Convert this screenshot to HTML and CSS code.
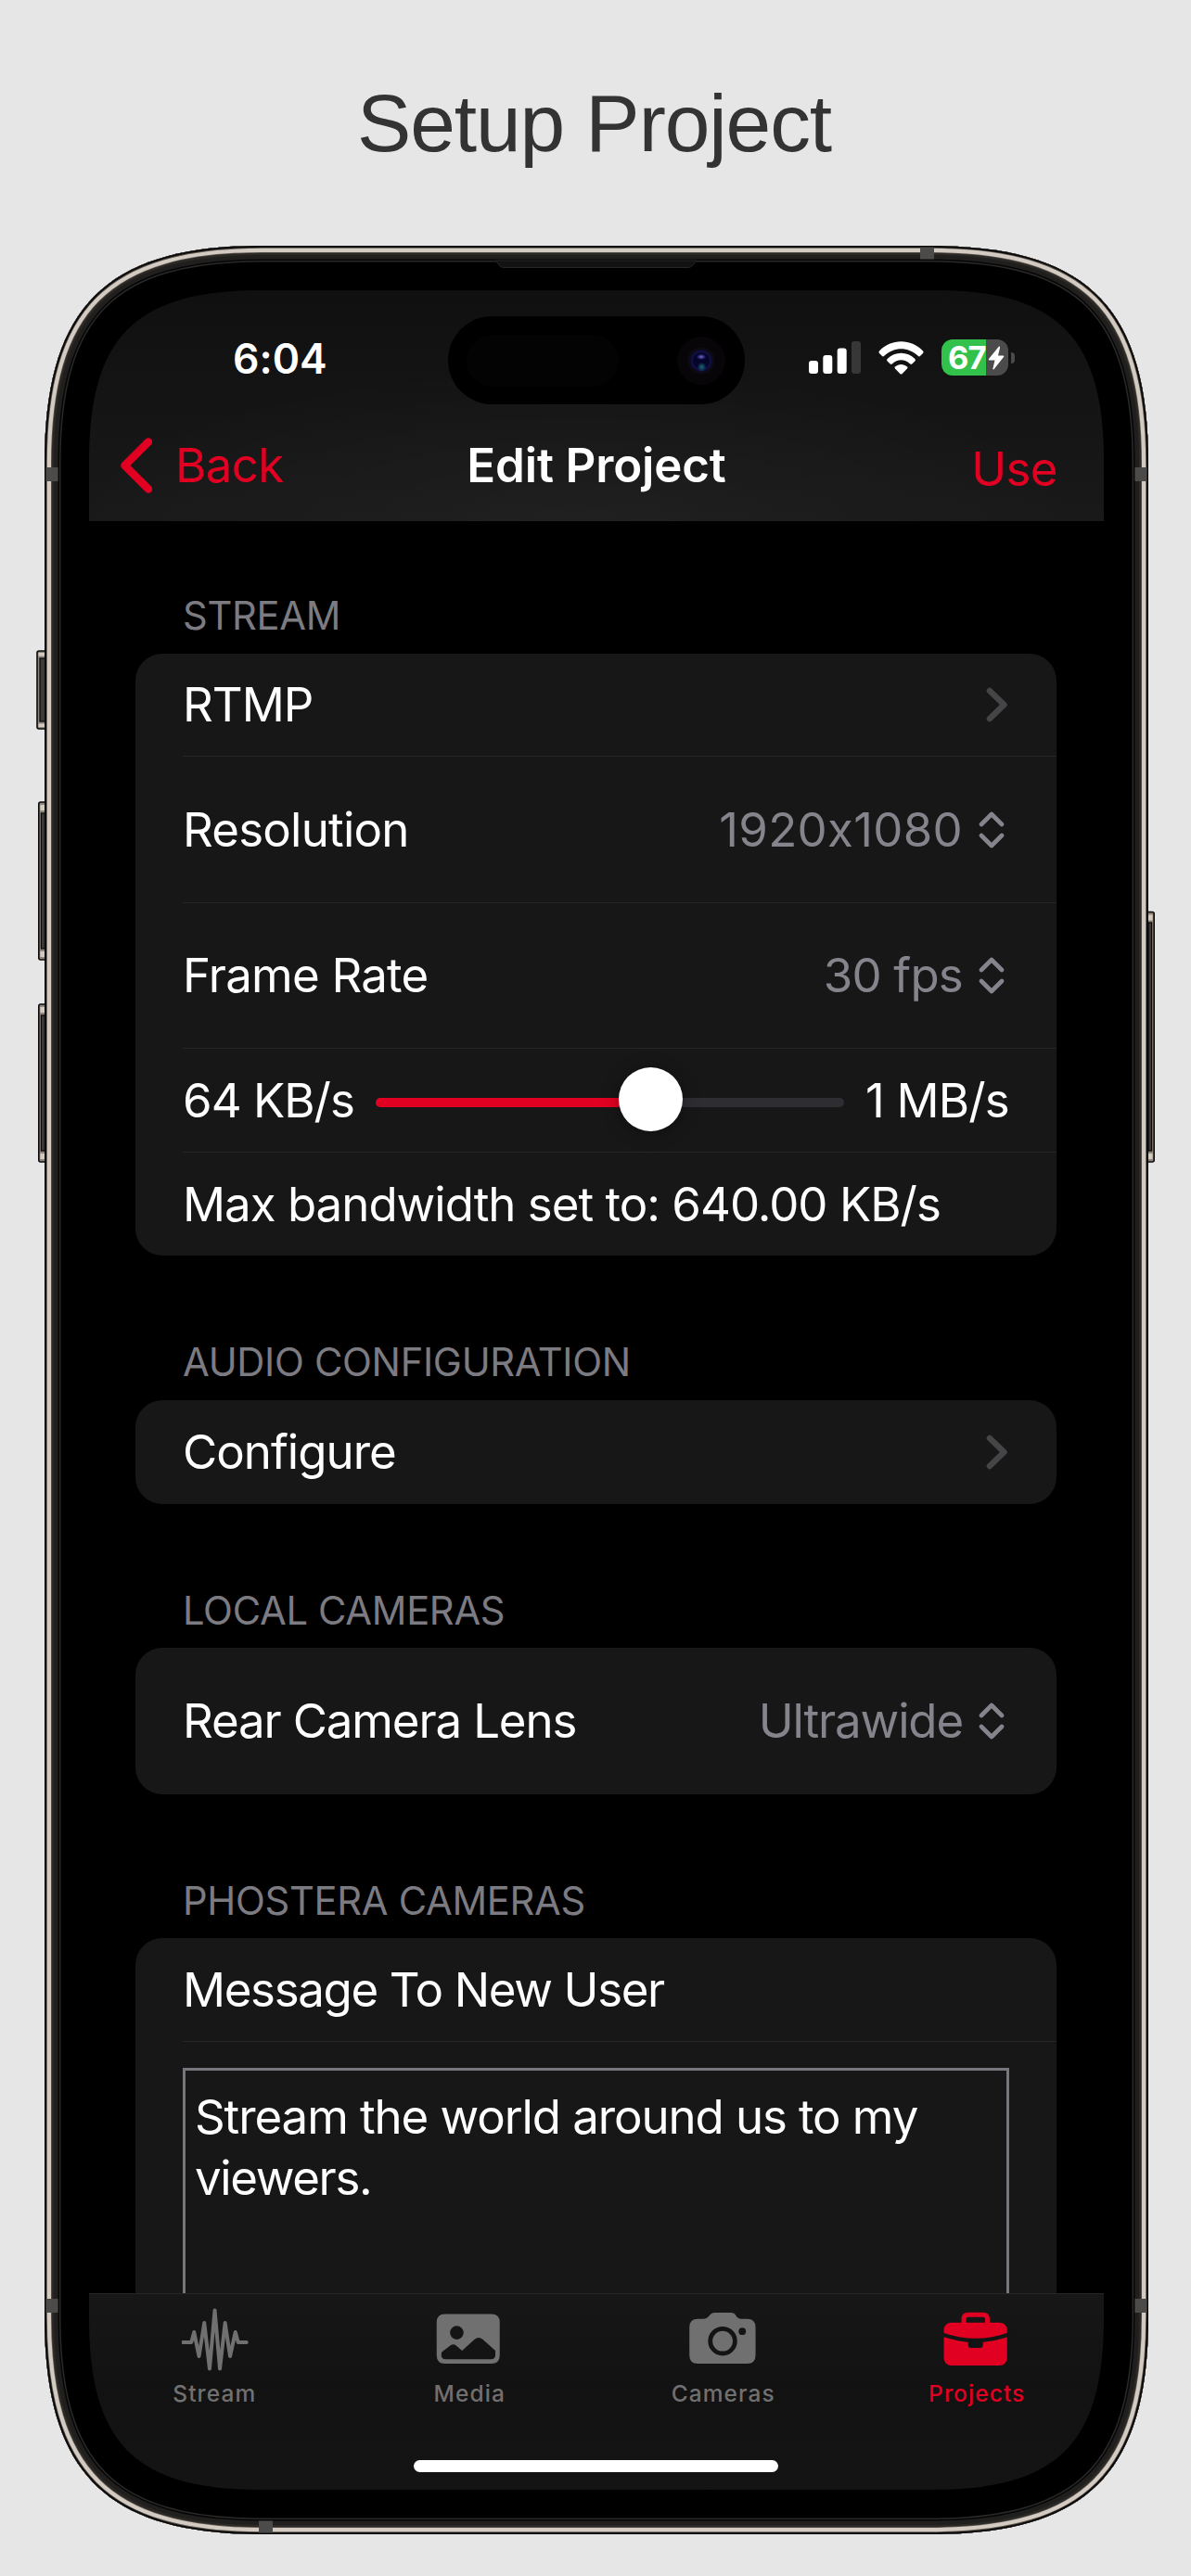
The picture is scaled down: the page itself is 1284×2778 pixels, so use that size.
FILE: index.html
```html
<!DOCTYPE html>
<html lang="en">
<head>
<meta charset="utf-8">
<title>Setup Project</title>
<link rel="stylesheet" href="styles.css">
</head>
<body>
<h1 class="title">Setup Project</h1>
<div class="phone">
  <svg class="frame" viewBox="-10 0 1210 2468" aria-hidden="true">
    <defs>
      <path id="body" d="M0 235C0 66 66 0 235 0H955C1124 0 1190 66 1190 235V2233C1190 2402 1124 2468 955 2468H235C66 2468 0 2402 0 2233Z"/>
      <clipPath id="bodyClip"><use href="#body"/></clipPath>
    </defs>
    <!-- side buttons -->
    <g fill="#8e867c" stroke="#0c0b0b" stroke-width="1.6">
      <rect x="-8" y="437" width="14" height="84" rx="2"/>
      <rect x="-6.2" y="600" width="14" height="170" rx="2"/>
      <rect x="-6.2" y="818" width="14" height="170" rx="2"/>
      <rect x="1182" y="718.5" width="14.2" height="269.5" rx="2"/>
    </g>
    <g fill="#d3cac0">
      <rect x="-6.5" y="439" width="8" height="3.5"/><rect x="-6.5" y="515.5" width="8" height="3.5"/>
      <rect x="-4.6" y="603" width="5" height="6"/><rect x="-4.6" y="761" width="5" height="6"/>
      <rect x="-4.6" y="821" width="5" height="6"/><rect x="-4.6" y="979" width="5" height="6"/>
      <rect x="1190" y="721.5" width="4.5" height="6"/><rect x="1190" y="979" width="4.5" height="6"/>
    </g>
    <g fill="#3d3a39" stroke="#080808" stroke-width="1.2">
      <rect x="-5" y="445" width="6" height="68"/>
      <rect x="-3.6" y="612" width="4" height="146"/>
      <rect x="-3.6" y="830" width="4" height="146"/>
      <rect x="1190" y="730" width="3.6" height="246"/>
    </g>
    <g clip-path="url(#bodyClip)" fill="none">
      <use href="#body" fill="#000"/>
      <use href="#body" stroke="#29292a" stroke-width="35"/>
      <use href="#body" stroke="#060606" stroke-width="32"/>
      <use href="#body" stroke="#211f1d" stroke-width="29"/>
      <use href="#body" stroke="#2b2926" stroke-width="20"/>
      <use href="#body" stroke="#5d5751" stroke-width="15.5"/>
      <use href="#body" stroke="#d3cac1" stroke-width="14"/>
      <use href="#body" stroke="#5c554f" stroke-width="5.6"/>
      <use href="#body" stroke="#0b0b0b" stroke-width="4"/>
      <g fill="#4c4b49">
        <rect x="1.500" y="239" width="13" height="15"/>
        <rect x="1175.5" y="239" width="13" height="15"/>
        <rect x="1.5" y="2214" width="13" height="15"/>
        <rect x="1175.5" y="2214" width="13" height="15"/>
        <rect x="944" y="1.5" width="15" height="13"/>
        <rect x="231" y="2453.5" width="15" height="13"/>
      </g>
      <path d="M486 16H703C699 20 699 23.5 693 23.5H496C490 23.5 490 20 486 16Z" fill="#121212" stroke="#262626" stroke-width="1"/>
    </g>
  </svg>

  <div class="screen">
    <header class="top">
      <div class="status">
        <span class="time">6:04</span>
        <span class="indicators">
          <svg width="56" height="36" viewBox="0 0 56 36">
            <g fill="#fff"><rect y="21" width="10" height="14" rx="3"/><rect x="15.3" y="15" width="10" height="20" rx="3"/><rect x="30.7" y="7.5" width="10" height="27.5" rx="3"/></g>
            <rect x="46" width="10" height="35" rx="3" fill="#373737"/>
          </svg>
          <svg class="wifi" width="49" height="36" viewBox="0 0 49 36">
            <g fill="#fff">
              <path d="M1 10.500C14-3.200 35-3.200 48 10.500Q49.200 11.800 48 13L45.200 15.800Q44 17 42.700 15.800C32 5.800 17 5.800 6.300 15.800Q5 17 3.800 15.800L1 13Q-.2 11.800 1 10.500Z"/>
              <path d="M9.600 19C18 10.500 31 10.500 39.400 19Q40.500 20.200 39.400 21.400L36.500 24.200Q35.400 25.300 34 24.200C28.500 19 20.500 19 15 24.200Q13.600 25.300 12.500 24.200L9.600 21.400Q8.500 20.200 9.600 19Z"/>
              <path d="M18 27.500C21.800 24 27.200 24 31 27.500Q32 28.500 31 29.600L25.500 35.200Q24.500 36 23.500 35.200L18 29.600Q17 28.500 18 27.500Z"/>
            </g>
          </svg>
          <span class="battery">
            <span class="cell"><span class="percent">67</span>
              <svg width="18" height="26" viewBox="0 0 18 26"><path d="M12 .5Q13.500 0 13 2L11 10.500H16.500Q18 10.700 17 12L6.500 25.200Q5 26 5.500 24L7.500 15.500H1.500Q0 15.200 1 14Z" fill="#fff"/></svg>
            </span>
            <span class="nub"></span>
          </span>
        </span>
        <div class="island"><span class="sensor"></span><span class="camera"></span></div>
      </div>
      <nav class="nav">
        <a class="back"><svg width="34" height="60" viewBox="0 0 34 60"><path d="M30 4.500 4.500 30 30 55.500" fill="none" stroke="#e10022" stroke-width="8.500" stroke-linecap="round" stroke-linejoin="round"/></svg><span>Back</span></a>
        <span class="heading">Edit Project</span>
        <a class="use">Use</a>
      </nav>
    </header>

    <main class="content">
      <h2 class="label label-first">STREAM</h2>
      <section class="card">
        <div class="row"><span>RTMP</span><svg class="chevron" width="24" height="38" viewBox="0 0 24 38"><path d="M4 4 19.500 19 4 34"/></svg></div>
        <div class="row tall"><span class="loose">Resolution</span><span class="value"><span class="dims">1920x1080</span><svg class="updown" width="28" height="42" viewBox="0 0 28 42"><path d="M3 15 14 4 25 15M3 27 14 38 25 27"/></svg></span></div>
        <div class="row tall"><span class="loose">Frame Rate</span><span class="value"><span class="loose">30 fps</span><svg class="updown" width="28" height="42" viewBox="0 0 28 42"><path d="M3 15 14 4 25 15M3 27 14 38 25 27"/></svg></span></div>
        <div class="row slide"><span class="min">64 KB/s</span><div class="slider"><span class="fill"></span><span class="knob"></span></div><span class="max loose">1 MB/s</span></div>
        <div class="row"><span>Max bandwidth set to: 640.00 KB/s</span></div>
      </section>

      <h2 class="label">AUDIO CONFIGURATION</h2>
      <section class="card">
        <div class="row"><span>Configure</span><svg class="chevron" width="24" height="38" viewBox="0 0 24 38"><path d="M4 4 19.500 19 4 34"/></svg></div>
      </section>

      <h2 class="label">LOCAL CAMERAS</h2>
      <section class="card">
        <div class="row tall"><span class="tight">Rear Camera Lens</span><span class="value"><span class="tight">Ultrawide</span><svg class="updown" width="28" height="42" viewBox="0 0 28 42"><path d="M3 15 14 4 25 15M3 27 14 38 25 27"/></svg></span></div>
      </section>

      <h2 class="label">PHOSTERA CAMERAS</h2>
      <section class="card card-last">
        <div class="row"><span class="tighter">Message To New User</span></div>
        <div class="editor"><p class="message">Stream the world around us to my<br><span class="tighter">viewers.</span></p></div>
      </section>
    </main>

    <footer class="tabs">
      <div class="tab tab-first">
        <svg width="74" height="70" viewBox="195.750 2488 74 70"><path d="M197 2526H206L209 2515 214.300 2541 220 2505 225.700 2554.500 231.300 2491.500 236.800 2554.500 242.400 2505 247.800 2541 253.500 2515 256.500 2526H265.500" fill="none" stroke="#707070" stroke-width="4" stroke-linecap="round" stroke-linejoin="round"/></svg>
        <span>Stream</span>
      </div>
      <div class="tab">
        <svg width="74" height="70" viewBox="469.250 2488 74 70"><path fill="#707070" fill-rule="evenodd" d="M480 2495.500H530Q539 2495.500 539 2504.500V2540Q539 2549 530 2549H480Q471 2549 471 2540V2504.500Q471 2495.500 480 2495.500ZM492.700 2508.300A7.300 7.300 0 1 0 492.700 2522.900A7.300 7.300 0 1 0 492.700 2508.300ZM476.500 2536.500 486 2529.300Q489 2527.200 492 2529.600L498.400 2535 512 2522.700Q516.300 2519.300 520.600 2522.700L534.300 2535V2539.300Q534.300 2544.300 529.300 2544.300H481Q476 2544.300 476 2539.300Z"/></svg>
        <span>Media</span>
      </div>
      <div class="tab">
        <svg width="74" height="70" viewBox="742.750 2488 74 70"><path fill="#707070" d="M751.500 2500.700H758Q761 2500.700 763 2498.700L766 2495.500Q767.500 2494 770 2494H788Q790.500 2494 792 2495.500L794 2498.500Q796 2500.700 799 2500.700H805.300Q814.300 2500.700 814.300 2509.700V2540Q814.300 2549 805.300 2549H752Q743 2549 743 2540V2509.700Q743 2500.700 752 2500.700Z"/><circle cx="778.800" cy="2524.700" r="13.300" fill="none" stroke="#141414" stroke-width="4.800"/><circle cx="800" cy="2514.200" r="3.900" fill="#141414"/></svg>
        <span>Cameras</span>
      </div>
      <div class="tab active">
        <svg width="74" height="70" viewBox="1016.250 2488 74 70"><path d="M1039.300 2507V2501Q1039.300 2496.300 1044 2496.300H1060Q1064.700 2496.300 1064.700 2501V2507" fill="none" stroke="#e10022" stroke-width="5"/><rect x="1017.800" y="2504.700" width="68.200" height="46.300" rx="8" fill="#e10022"/><path d="M1016 2517.500Q1052 2530.500 1088 2517.500" fill="none" stroke="#141414" stroke-width="4.300"/><path d="M1044 2524H1060V2529Q1060 2532 1057 2532H1047Q1044 2532 1044 2529Z" fill="#141414"/></svg>
        <span>Projects</span>
      </div>
      <div class="home"></div>
    </footer>
  </div>
</div>
</body>
</html>
```

FILE: styles.css
```css
* { box-sizing: border-box; }

body {
  margin: 0;
  width: 1284px;
  height: 2778px;
  overflow: hidden;
  background: #e6e6e6;
  font-family: "Inter", "Liberation Sans", sans-serif;
  font-size: 51px;
  font-feature-settings: "calt" 0;
  color: #fff;
}

.title {
  margin: 0;
  height: 265px;
  padding: 1px 3px 0 0;
  text-align: center;
  font: 400 87.5px/265px "Liberation Sans", Arial, sans-serif;
  letter-spacing: -1.1px;
  color: #333;
}

.phone {
  position: relative;
  margin-left: 48px;
  width: 1190px;
  height: 2468px;
  padding: 48px;
}

.frame {
  position: absolute;
  left: -10px;
  top: 0;
  width: 1210px;
  height: 2468px;
}

.screen {
  position: relative;
  display: flex;
  flex-direction: column;
  width: 1094px;
  height: 2372px;
  background: #000;
  clip-path: path("M0 185C0 50 50 0 185 0H909C1044 0 1094 50 1094 185V2187C1094 2322 1044 2372 909 2372H185C50 2372 0 2322 0 2187Z");
}

/* status bar and navigation */
.top {
  height: 249px;
  flex: none;
  background:
    radial-gradient(ellipse 560px 170px at 48% 100%, rgba(255, 255, 255, .03), transparent),
    linear-gradient(#101010, #191919);
}

.status {
  position: relative;
  display: flex;
  justify-content: space-between;
  align-items: center;
  height: 148px;
  padding: 0 96px 0 155px;
}

.time { font-size: 44.5px; font-weight: 600; line-height: 50px; padding-bottom: 1px; }

.indicators { display: flex; align-items: center; padding-bottom: 3px; }
.wifi { margin-left: 19px; }
.battery { display: flex; align-items: center; margin-left: 19px; gap: 3px; }

.cell {
  display: flex;
  align-items: center;
  width: 72px;
  height: 38.5px;
  padding-left: 7px;
  gap: 1px;
  border-radius: 12px;
  background: linear-gradient(90deg, #32c24b 48.5px, #4b4b4b 48.5px);
}

.percent { width: 42px; font-size: 34.5px; font-weight: 700; line-height: 38px; letter-spacing: -1px; }
.nub { width: 4px; height: 12px; border-radius: 0 5px 5px 0; background: #4b4b4b; }

.island {
  position: absolute;
  left: 387px;
  top: 28px;
  display: flex;
  align-items: center;
  justify-content: space-between;
  width: 320px;
  height: 95px;
  padding: 0 21px 0 20px;
  border-radius: 48px;
  background: #000;
}

.sensor { width: 164px; height: 56px; border-radius: 28px; background: #030303; }

.camera {
  width: 52px;
  height: 52px;
  border-radius: 50%;
  background:
    radial-gradient(ellipse 5px 3px at 50% 42%, #6a6ad8, transparent),
    radial-gradient(circle 5px at 51% 63%, #1c6a78, transparent),
    radial-gradient(circle at 50% 50%, #05052a 0 8px, #10104e 10px, #0d0a18 12px, #0c0a12 14px, #070507 15px);
}

.nav {
  display: grid;
  grid-template-columns: 1fr auto 1fr;
  align-items: center;
  height: 81px;
  padding: 0 34px;
  line-height: 60px;
  letter-spacing: -.6px;
}

.back { display: flex; align-items: center; gap: 25px; color: #e10022; }
.use { justify-self: end; padding: 8px 16px 0 0; color: #e10022; }
.heading { font-weight: 600; letter-spacing: -.15px; }

/* settings list */
.content {
  flex: 1;
  min-height: 0;
  overflow: hidden;
  padding: 0 51px 0 50px;
}

.label {
  margin: 0;
  height: 155.5px;
  padding: 90px 0 0 51px;
  font-size: 41.7px;
  font-weight: 400;
  line-height: 50px;
  letter-spacing: -.32px;
  color: #7c7b81;
}

.label-first { height: 142.5px; padding-top: 77px; }

.card { overflow: hidden; border-radius: 29px; background: #171717; }
.card-last { border-radius: 29px 29px 0 0; height: 400px; }

.row {
  display: flex;
  align-items: center;
  justify-content: space-between;
  height: 111.8px;
  margin-left: 51px;
  padding: 1px 51px 0 0;
  line-height: 60px;
  letter-spacing: -1px;
  white-space: nowrap;
}

.row:not(:last-child) { border-bottom: 1.5px solid #262627; }
.tall { height: 157.3px; }
.loose { letter-spacing: -.8px; }
.tight { letter-spacing: -1.15px; }
.tighter { letter-spacing: -1.35px; }
.dims { letter-spacing: .3px; }

.value { display: flex; align-items: center; gap: 17px; padding-right: 5px; color: #85848c; }
.chevron { margin-right: 1px; }
.chevron path { fill: none; stroke: #454547; stroke-width: 6.5; stroke-linecap: round; stroke-linejoin: round; }
.updown path { fill: none; stroke: #85848c; stroke-width: 4.6; stroke-linecap: round; stroke-linejoin: round; }

.slide { justify-content: flex-start; }
.min { width: 208px; flex: none; }
.slider { position: relative; width: 505px; height: 10px; flex: none; margin-top: 4px; border-radius: 5px; background: #2e2d32; }
.fill { display: block; width: 296px; height: 10px; border-radius: 5px; background: #e10022; }
.knob { position: absolute; left: 262px; top: -32.5px; width: 69px; height: 69px; border-radius: 50%; background: #fff; box-shadow: 0 2px 18px rgba(0, 0, 0, .35); }
.max { margin-left: auto; }

.editor {
  height: 400px;
  margin: 28px 51px 0;
  padding: 17px 10px;
  border: 3px solid #77767c;
}

.message { margin: 0; line-height: 66.3px; letter-spacing: -1.1px; white-space: nowrap; }

/* tab bar */
.tabs {
  position: relative;
  flex: none;
  display: grid;
  grid-template-columns: repeat(4, 1fr);
  height: 212px;
  border-top: 1.5px solid #262627;
  background: linear-gradient(#171717, #121212 45%, #141414);
}

.tab {
  display: flex;
  flex-direction: column;
  align-items: center;
  padding-top: 14px;
  font-size: 24.5px;
  font-weight: 450;
  line-height: 30px;
  letter-spacing: 1.1px;
  color: #707070;
}

.tab span { margin-top: 8px; }
.tab-first span { margin-right: 3px; }
.tab svg { display: block; }
.active { color: #e10022; }

.home {
  position: absolute;
  left: 350px;
  bottom: 19px;
  width: 393px;
  height: 13px;
  border-radius: 7px;
  background: #fff;
}
```
